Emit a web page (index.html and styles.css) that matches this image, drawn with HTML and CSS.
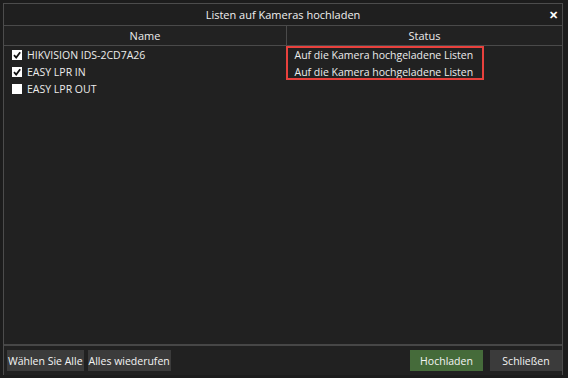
FILE: index.html
```html
<!DOCTYPE html>
<html lang="de">
<head>
  <meta charset="UTF-8">
  <title>Listen auf Kameras hochladen</title>
  <link rel="stylesheet" href="styles.css">
</head>
<body>

  <div class="dialog">
    <div class="titlebar">
      <span class="title">Listen auf Kameras hochladen</span>
      <span class="close">&#x2715;</span>
    </div>

    <table class="cams">
      <thead>
        <tr>
          <th class="col-name">Name</th>
          <th class="col-status">Status</th>
        </tr>
      </thead>
      <tbody>
        <tr>
          <td><span class="box checked"><svg viewBox="0 0 10 10"><path d="M2 5.2 L4.2 7.6 L8.2 2.2" /></svg></span>HIKVISION IDS-2CD7A26</td>
          <td>Auf die Kamera hochgeladene Listen</td>
        </tr>
        <tr>
          <td><span class="box checked"><svg viewBox="0 0 10 10"><path d="M2 5.2 L4.2 7.6 L8.2 2.2" /></svg></span>EASY LPR IN</td>
          <td>Auf die Kamera hochgeladene Listen</td>
        </tr>
        <tr>
          <td><span class="box"></span>EASY LPR OUT</td>
          <td></td>
        </tr>
      </tbody>
    </table>

    <!-- highlight drawn over the first two status cells -->
    <div class="mark"></div>

    <div class="footer">
      <div class="left">
        <button class="btn">Wählen Sie Alle</button>
        <button class="btn">Alles wiederufen</button>
      </div>
      <div class="right">
        <button class="btn btn-green">Hochladen</button>
        <button class="btn btn-close">Schließen</button>
      </div>
    </div>
  </div>

</body>
</html>
```

FILE: styles.css
```css
html, body {
  margin: 0;
  padding: 0;
  height: 100%;
  background: #1c1c1c;
}

body {
  font-family: 'Open Sans', 'Noto Sans', sans-serif;
  font-size: 11px;
  color: #ececec;
  overflow: hidden;
}

.dialog {
  position: relative;
  margin: 3px 0 0 3px;
  width: 558px;
  height: 371px;
  border-left: 1px solid #4c4c4c;
  border-right: 1px solid #4c4c4c;
  border-top: 1px solid #4c4c4c;
  background: #212121;
  display: flex;
  flex-direction: column;
}

.titlebar {
  height: 21px;
  border-bottom: 1px solid #4a4a4a;
  display: flex;
  align-items: center;
  justify-content: center;
  position: relative;
  background: #1f1f1f;
}

.title {
  font-size: 11px;
  color: #f0f0f0;
}

.close {
  position: absolute;
  right: 4px;
  top: 3px;
  font-size: 11px;
  font-weight: bold;
  color: #ffffff;
}

.cams {
  width: 100%;
  border-collapse: collapse;
}

.cams th {
  height: 19px;
  padding: 0;
  font-weight: normal;
  background: #222222;
  border-bottom: 1px solid #4a4a4a;
}

.col-name {
  width: 282px;
  border-right: 1px solid #4a4a4a;
}

.cams td {
  height: 17px;
  padding: 0 0 0 8px;
  white-space: nowrap;
  font-size: 10.5px;
}

.box {
  display: inline-block;
  width: 10px;
  height: 10px;
  background: #ffffff;
  vertical-align: -1px;
  margin-right: 5px;
}

.box svg {
  display: block;
  width: 10px;
  height: 10px;
}

.box path {
  fill: none;
  stroke: #111111;
  stroke-width: 1.8;
}

.mark {
  position: absolute;
  left: 282px;
  top: 42px;
  width: 194px;
  height: 30px;
  border: 2px solid #e8413d;
}

.footer {
  margin-top: auto;
  border-top: 2px solid #474747;
  height: 25px;
  display: flex;
  justify-content: space-between;
  align-items: flex-start;
  padding: 4px 0 0 3px;
}

.left {
  display: flex;
  gap: 4px;
}

.right {
  display: flex;
  gap: 7px;
}

.btn {
  font-family: 'Open Sans', 'Noto Sans', sans-serif;
  font-size: 10.5px;
  color: #f4f4f4;
  background: #3b3b3b;
  border: none;
  height: 21px;
  padding: 0 1px;
  margin: 0;
}

.btn-green {
  background: #456b3a;
  width: 73px;
}

.btn-close {
  width: 72px;
}
```
